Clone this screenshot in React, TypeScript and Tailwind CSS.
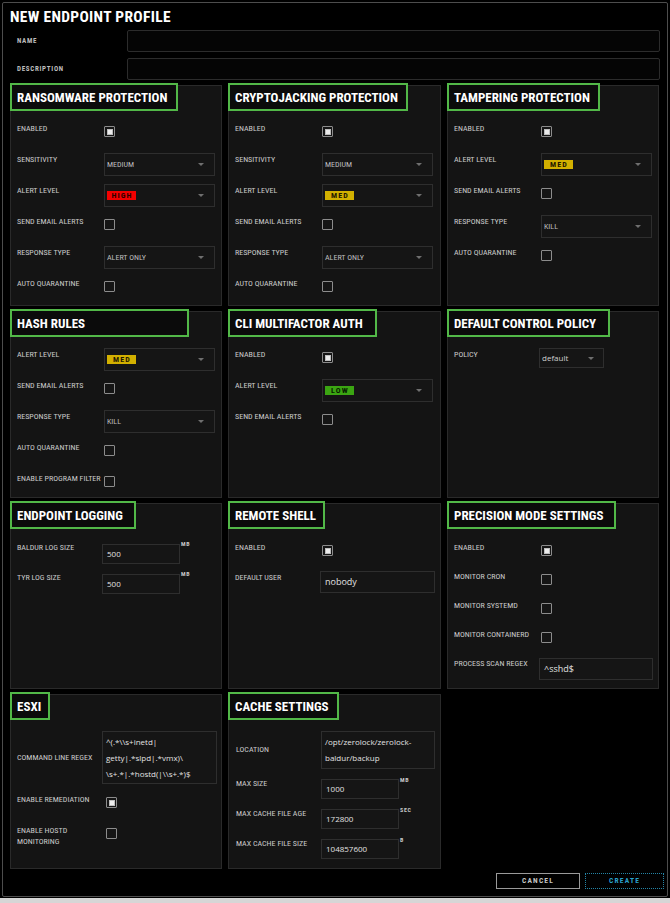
import type { ReactNode } from "react";

function Label({ children, w }: { children: ReactNode; w: string }) {
  return (
    <div className={`shrink-0 pt-[2px] text-[8px] leading-[10px] text-[#cbcbcb] ${w}`}>
      {children}
    </div>
  );
}

function Check({ on = false }: { on?: boolean }) {
  return (
    <div className="mt-[4px] flex h-[11px] w-[11px] items-center justify-center rounded-[1px] border border-[#8c8c8c] bg-[#151515]">
      {on && <div className="h-[6px] w-[6px] border border-[#bdbdbd] bg-[#ececec]"></div>}
    </div>
  );
}

function Caret() {
  return <div className="h-0 w-0 border-x-[3px] border-t-[3px] border-x-transparent border-t-[#6f6f6f]"></div>;
}

function Select({ children }: { children: ReactNode }) {
  return (
    <div className="flex h-[23px] w-[111px] items-center justify-between border border-[#2e2e2e] bg-[#151515] pl-[2px] pr-[10px] text-[8px] text-[#bdbdbd]">
      <div>{children}</div>
      <Caret />
    </div>
  );
}

function Badge({ level }: { level: "HIGH" | "MED" | "LOW" }) {
  const color =
    level === "HIGH" ? "bg-[#f20000] text-[#2a0000]" : level === "MED" ? "bg-[#d2b000] text-[#1f1900]" : "bg-[#3ba512] text-[#082000]";
  return (
    <div className={`flex h-[9px] w-[29px] items-center justify-center pl-[1px] text-[8px] font-bold leading-none tracking-[0.14em] ${color}`}>
      {level}
    </div>
  );
}

function TextIn({ children, w, h = "h-[20px]" }: { children: ReactNode; w: string; h?: string }) {
  return (
    <div
      className={`flex items-center border border-[#2e2e2e] bg-[#151515] pl-[4px] font-['Open_Sans',sans-serif] text-[8px] text-[#e2e2e2] ${w} ${h}`}
    >
      {children}
    </div>
  );
}

function Unit({ children }: { children: ReactNode }) {
  return <div className="ml-[1px] text-[6px] font-bold leading-none tracking-[0.12em] text-[#c8c8c8]">{children}</div>;
}

function Row({ children, h = "h-[31px]" }: { children: ReactNode; h?: string }) {
  return <div className={`flex items-start pl-[6px] ${h}`}>{children}</div>;
}

function Panel({ title, hw, children }: { title: string; hw: string; children?: ReactNode }) {
  return (
    <div className="flex flex-col border border-[#2a2a2a] bg-[#141414]">
      <div className={`-ml-px -mt-[3px] flex h-[28px] shrink-0 items-center border-2 border-[#52b848] bg-[#0b0b0b] pl-[5px] ${hw}`}>
        <span className="whitespace-nowrap text-[13px] font-bold leading-none text-white">{title}</span>
      </div>
      <div className="mt-[11px] flex flex-col">{children}</div>
    </div>
  );
}

export default function App() {
  return (
    <div className="h-[903px] w-[670px] bg-[#d6d6d6] font-['Roboto_Condensed','Roboto',sans-serif]">
      <div className="h-[898px] bg-black pl-[2px] pt-[2px]">
        <div className="flex h-[895px] w-[666px] flex-col rounded-[2px] border border-[#4d4d4d] bg-black">
          <div className="ml-[7px] mt-[5px] h-[18px] text-[15.5px] font-bold leading-[18px] tracking-[0.02em] text-white">
            NEW ENDPOINT PROFILE
          </div>
          <div className="mt-[4px] flex items-center">
            <div className="w-[124px] pl-[14px] text-[7px] font-bold tracking-[0.1em] text-[#bdbdbd]">NAME</div>
            <div className="h-[22px] w-[533px] rounded-[2px] border border-[#2c2c2c] bg-[#050505]"></div>
          </div>
          <div className="mt-[6px] flex items-center">
            <div className="w-[124px] pl-[14px] text-[7px] font-bold tracking-[0.1em] text-[#bdbdbd]">DESCRIPTION</div>
            <div className="h-[22px] w-[533px] rounded-[2px] border border-[#2c2c2c] bg-[#050505]"></div>
          </div>

          <div className="ml-[7px] mt-[5px] grid grid-cols-[212px_213px_212px] grid-rows-[221px_187px_186px_175px] gap-x-[6px] gap-y-[5px]">
            <Panel title="RANSOMWARE PROTECTION" hw="w-[168px]">
              <Row><Label w="w-[87px]">ENABLED</Label><Check on /></Row>
              <Row><Label w="w-[87px]">SENSITIVITY</Label><Select>MEDIUM</Select></Row>
              <Row><Label w="w-[87px]">ALERT LEVEL</Label><Select><Badge level="HIGH" /></Select></Row>
              <Row><Label w="w-[87px]">SEND EMAIL ALERTS</Label><Check /></Row>
              <Row><Label w="w-[87px]">RESPONSE TYPE</Label><Select>ALERT ONLY</Select></Row>
              <Row><Label w="w-[87px]">AUTO QUARANTINE</Label><Check /></Row>
            </Panel>

            <Panel title="CRYPTOJACKING PROTECTION" hw="w-[180px]">
              <Row><Label w="w-[87px]">ENABLED</Label><Check on /></Row>
              <Row><Label w="w-[87px]">SENSITIVITY</Label><Select>MEDIUM</Select></Row>
              <Row><Label w="w-[87px]">ALERT LEVEL</Label><Select><Badge level="MED" /></Select></Row>
              <Row><Label w="w-[87px]">SEND EMAIL ALERTS</Label><Check /></Row>
              <Row><Label w="w-[87px]">RESPONSE TYPE</Label><Select>ALERT ONLY</Select></Row>
              <Row><Label w="w-[87px]">AUTO QUARANTINE</Label><Check /></Row>
            </Panel>

            <Panel title="TAMPERING PROTECTION" hw="w-[153px]">
              <Row><Label w="w-[87px]">ENABLED</Label><Check on /></Row>
              <Row><Label w="w-[87px]">ALERT LEVEL</Label><Select><Badge level="MED" /></Select></Row>
              <Row><Label w="w-[87px]">SEND EMAIL ALERTS</Label><Check /></Row>
              <Row><Label w="w-[87px]">RESPONSE TYPE</Label><Select>KILL</Select></Row>
              <Row><Label w="w-[87px]">AUTO QUARANTINE</Label><Check /></Row>
            </Panel>

            <Panel title="HASH RULES" hw="w-[179px]">
              <Row><Label w="w-[87px]">ALERT LEVEL</Label><Select><Badge level="MED" /></Select></Row>
              <Row><Label w="w-[87px]">SEND EMAIL ALERTS</Label><Check /></Row>
              <Row><Label w="w-[87px]">RESPONSE TYPE</Label><Select>KILL</Select></Row>
              <Row><Label w="w-[87px]">AUTO QUARANTINE</Label><Check /></Row>
              <Row><Label w="w-[87px]">ENABLE PROGRAM FILTER</Label><Check /></Row>
            </Panel>

            <Panel title="CLI MULTIFACTOR AUTH" hw="w-[149px]">
              <Row><Label w="w-[87px]">ENABLED</Label><Check on /></Row>
              <Row><Label w="w-[87px]">ALERT LEVEL</Label><Select><Badge level="LOW" /></Select></Row>
              <Row><Label w="w-[87px]">SEND EMAIL ALERTS</Label><Check /></Row>
            </Panel>

            <Panel title="DEFAULT CONTROL POLICY" hw="w-[163px]">
              <Row>
                <Label w="w-[85px]">POLICY</Label>
                <div className="flex h-[20px] w-[65px] items-center justify-between border border-[#2e2e2e] bg-[#151515] pl-[2px] pr-[9px] font-['Open_Sans',sans-serif] text-[8px] text-[#d0d0d0]">
                  <div>default</div>
                  <Caret />
                </div>
              </Row>
            </Panel>

            <Panel title="ENDPOINT LOGGING" hw="w-[126px]">
              <div className="mt-[1px]"></div>
              <Row h="h-[30px]">
                <Label w="w-[85px]">BALDUR LOG SIZE</Label>
                <div className="mt-[3px]"><TextIn w="w-[78px]">500</TextIn></div>
                <Unit>MB</Unit>
              </Row>
              <Row h="h-[30px]">
                <Label w="w-[85px]">TYR LOG SIZE</Label>
                <div className="mt-[3px]"><TextIn w="w-[78px]">500</TextIn></div>
                <Unit>MB</Unit>
              </Row>
            </Panel>

            <Panel title="REMOTE SHELL" hw="w-[97px]">
              <div className="mt-[1px]"></div>
              <Row h="h-[30px]"><Label w="w-[87px]">ENABLED</Label><Check on /></Row>
              <Row>
                <Label w="w-[85px]">DEFAULT USER</Label>
                <TextIn w="w-[115px]" h="h-[22px]">
                  <span className="text-[9px]">nobody</span>
                </TextIn>
              </Row>
            </Panel>

            <Panel title="PRECISION MODE SETTINGS" hw="w-[169px]">
              <div className="mt-[1px]"></div>
              <Row h="h-[29px]"><Label w="w-[87px]">ENABLED</Label><Check on /></Row>
              <Row h="h-[29px]"><Label w="w-[87px]">MONITOR CRON</Label><Check /></Row>
              <Row h="h-[29px]"><Label w="w-[87px]">MONITOR SYSTEMD</Label><Check /></Row>
              <Row h="h-[29px]"><Label w="w-[87px]">MONITOR CONTAINERD</Label><Check /></Row>
              <Row>
                <Label w="w-[85px]">PROCESS SCAN REGEX</Label>
                <div className="mt-[1px]">
                  <TextIn w="w-[114px]" h="h-[22px]"><span className="text-[9px]">^sshd$</span></TextIn>
                </div>
              </Row>
            </Panel>

            <Panel title="ESXI" hw="w-[40px]">
              <div className="flex items-center pl-[6px]">
                <div className="w-[85px] shrink-0 text-[8px] leading-[10px] text-[#cbcbcb]">COMMAND LINE REGEX</div>
                <div className="h-[53px] w-[115px] border border-[#2e2e2e] bg-[#151515] pl-[3px] pt-[2px] font-['Open_Sans',sans-serif] text-[8px] leading-[16px] text-[#e2e2e2]">
                  <div>^(.*\\s+inetd|</div>
                  <div>getty|.*slpd|.*vmx)\</div>
                  <div>\s+.*|.*hostd(|\\s+.*)$</div>
                </div>
              </div>
              <div className="mt-[9px] flex items-start pl-[6px]">
                <div className="w-[89px] shrink-0 pt-[2px] text-[8px] leading-[10px] text-[#cbcbcb]">ENABLE REMEDIATION</div>
                <Check on />
              </div>
              <div className="mt-[17px] flex items-start pl-[6px]">
                <div className="w-[89px] shrink-0 text-[8px] leading-[11px] text-[#cbcbcb]">
                  ENABLE HOSTD
                  <br />
                  MONITORING
                </div>
                <div className="-mt-[1px]"><Check /></div>
              </div>
            </Panel>

            <Panel title="CACHE SETTINGS" hw="w-[111px]">
              <div className="flex items-center pl-[7px]">
                <div className="w-[85px] shrink-0 text-[8px] leading-[10px] text-[#cbcbcb]">LOCATION</div>
                <div className="h-[38px] w-[114px] border border-[#2e2e2e] bg-[#151515] pl-[3px] pt-[2px] font-['Open_Sans',sans-serif] text-[8px] leading-[16px] text-[#e2e2e2]">
                  <div>/opt/zerolock/zerolock-</div>
                  <div>baldur/backup</div>
                </div>
              </div>
              <div className="mt-[8px]"></div>
              <Row h="h-[30px]">
                <div className="pl-px"></div>
                <Label w="w-[85px]">MAX SIZE</Label>
                <div className="mt-[2px]"><TextIn w="w-[78px]">1000</TextIn></div>
                <Unit>MB</Unit>
              </Row>
              <Row h="h-[30px]">
                <div className="pl-px"></div>
                <Label w="w-[85px]">MAX CACHE FILE AGE</Label>
                <div className="mt-[2px]"><TextIn w="w-[78px]">172800</TextIn></div>
                <Unit>SEC</Unit>
              </Row>
              <Row h="h-[30px]">
                <div className="pl-px"></div>
                <Label w="w-[85px]">MAX CACHE FILE SIZE</Label>
                <div className="mt-[2px]"><TextIn w="w-[78px]">104857600</TextIn></div>
                <Unit>B</Unit>
              </Row>
            </Panel>
          </div>

          <div className="mt-[4px] flex justify-end gap-[5px] pr-[3px]">
            <div className="flex h-[16px] w-[84px] items-center justify-center border border-[#9a9a9a] text-[7.5px] font-bold tracking-[0.16em] text-[#c4c4c4]">
              CANCEL
            </div>
            <div className="flex h-[16px] w-[79px] items-center justify-center border border-dotted border-[#2384a6] text-[7.5px] font-bold tracking-[0.16em] text-[#2aa0cc]">
              CREATE
            </div>
          </div>
        </div>
      </div>
    </div>
  );
}
